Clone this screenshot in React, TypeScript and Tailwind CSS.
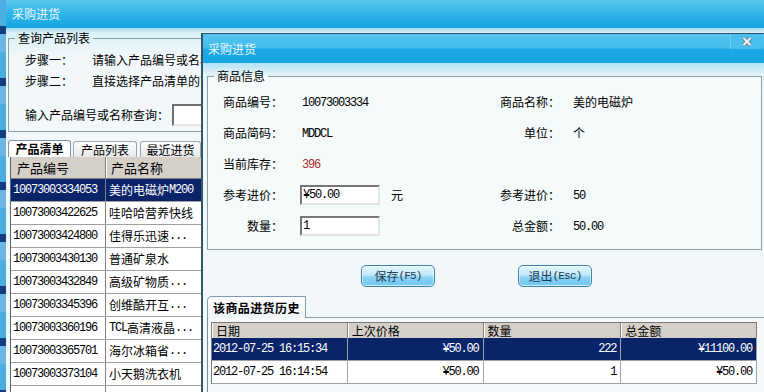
import React from 'react';

const mono = "font-['Liberation_Mono',monospace] text-[12px] tracking-[-1.2px]";

// ASCII runs get the narrow mono face, the rest stays in the CJK face
const mix = (s: string) =>
  s
    .split(/([\x20-\x7e¥]+)/)
    .filter(Boolean)
    .map((p, i) =>
      /^[\x20-\x7e¥]+$/.test(p) ? (
        <span key={i} className={mono}>
          {p}
        </span>
      ) : (
        <span key={i}>{p}</span>
      )
    );

const products = [
  ['10073003334053', '美的电磁炉M200'],
  ['10073003422625', '哇哈哈营养快线'],
  ['10073003424800', '佳得乐迅速...'],
  ['10073003430130', '普通矿泉水'],
  ['10073003432849', '高级矿物质...'],
  ['10073003345396', '创维酷开互...'],
  ['10073003360196', 'TCL高清液晶...'],
  ['10073003365701', '海尔冰箱省...'],
  ['10073003373104', '小天鹅洗衣机'],
  ['', ''],
];

const history = [
  ['2012-07-25 16:15:34', '¥50.00', '222', '¥11100.00'],
  ['2012-07-25 16:14:54', '¥50.00', '1', '¥50.00'],
];

const infoRows = [
  { l: '商品编号：', v: '10073003334', rl: '商品名称：', rv: '美的电磁炉' },
  { l: '商品简码：', v: 'MDDCL', rl: '单位：', rv: '个' },
  { l: '当前库存：', v: '396', rl: '', rv: '', red: true },
  { l: '参考进价：', v: '¥50.00', rl: '参考进价：', rv: '50', input: true, unit: '元' },
  { l: '数量：', v: '1', rl: '总金额：', rv: '50.00', input: true },
];

const inputBox =
  'flex h-[20px] w-[80px] items-center border-2 border-t-[#777] border-l-[#777] border-b-[#e4e4e4] border-r-[#e4e4e4] bg-white pl-[1px]';

function Button({ label, keyName }: { label: string; keyName: string }) {
  return (
    <div className="flex h-[22px] w-[74px] items-center justify-center rounded-[5px] border border-[#3f80b2] bg-[linear-gradient(180deg,#e4f6fd_0%,#c2e9f9_45%,#8fd3f3_55%,#70c8f1_90%,#9adaf6_100%)] text-[#1d3a58] shadow-[inset_0_0_0_1px_rgba(255,255,255,0.55)]">
      <span>{label}</span>
      <span className="font-['Liberation_Mono',monospace] text-[11px] tracking-[-0.8px]">{keyName}</span>
    </div>
  );
}

function Dialog() {
  return (
    <div className="absolute left-[201px] top-[33px] flex h-[359px] w-[563px] flex-col border-l-2 border-t border-[#34566b]">
      <div className="flex h-[29px] shrink-0 justify-between bg-[linear-gradient(180deg,#55c5ef_0%,#40bcec_48%,#1ca9e5_52%,#17a6e3_100%)]">
        <span className="self-center pl-[5px] text-[#eaf8ff]">采购进货</span>
        <div className="mr-[2px] flex h-[15px] w-[32px] items-center justify-center border-l border-[#6bcdf1] bg-[#48bfed]">
          <svg width="12" height="11" viewBox="0 0 12 11">
            <path d="M2.5 2 L9.5 9 M9.5 2 L2.5 9" stroke="#71899a" strokeWidth="4" />
            <path d="M2.5 2 L9.5 9 M9.5 2 L2.5 9" stroke="#eef3f6" strokeWidth="2" />
          </svg>
        </div>
      </div>

      <div className="flex flex-1 flex-col bg-[linear-gradient(180deg,#b2e3f5_0px,#e4f4f9_12px,#f2f8fa_40px)] pl-[4px] pt-[6px]">
        <fieldset className="w-[555px] border border-[#8c9ea9] bg-[#f5fafb]">
          <legend className="ml-[6px] px-[3px]">商品信息</legend>
          <div className="pb-[8px] pt-[3px]">
            {infoRows.map((r) => (
              <div key={r.l} className="flex h-[31px] items-center">
                <div className="w-[75px] text-right">{r.l}</div>
                <div className="w-[17px]" />
                <div className="flex w-[160px] items-center">
                  {r.input ? (
                    <>
                      <div className={inputBox}>{mix(r.v)}</div>
                      {r.unit && <span className="ml-[11px]">{r.unit}</span>}
                    </>
                  ) : (
                    <span className={`pl-[2px] ${r.red ? 'text-[#b02a2a]' : ''}`}>{mix(r.v)}</span>
                  )}
                </div>
                <div className="w-[100px] text-right">{r.rl}</div>
                <div className="pl-[13px]">{mix(r.rv)}</div>
              </div>
            ))}
          </div>
        </fieldset>

        <div className="ml-[154px] mt-[15px] flex gap-[83px]">
          <Button label="保存" keyName="(F5)" />
          <Button label="退出" keyName="(Esc)" />
        </div>

        <div className="mt-[9px] flex h-[22px] items-end">
          <div className="flex h-[22px] w-[99px] items-center rounded-tl-[5px] border-l border-r border-t border-[#7d9bb6] bg-[linear-gradient(180deg,#ffffff,#eef5f8)] pl-[5px] text-[12px] font-bold tracking-[0.4px]">
            该商品进货历史
          </div>
          <div className="flex-1 border-b border-[#8c9ea9]" />
        </div>
        <div className="flex-1 border-l border-[#7a8a96] bg-[#f4f9fb] pl-[3px] pt-[4px]">
          <div className="w-[546px] border-l border-t border-[#7b7b7b]">
            <div className="flex h-[15px] bg-[#d4d0c8] leading-[15px]">
              {['日期', '上次价格', '数量', '总金额'].map((h, i) => (
                <div
                  key={h}
                  className={`${i === 2 ? 'w-[138px]' : 'w-[136px]'} border-r border-[#808080] pl-[4px] shadow-[inset_1px_0_0_#fff]`}
                >
                  {h}
                </div>
              ))}
            </div>
            {history.map((r, i) => (
              <div
                key={i}
                className={`flex h-[23px] items-center border-b border-[#a0a0a0] ${i === 0 ? 'bg-[#0a246a] text-white' : 'bg-white'}`}
              >
                <div className="flex h-full w-[136px] items-center border-r border-[#a0a0a0] pl-[1px]">{mix(r[0])}</div>
                <div className="flex h-full w-[136px] items-center justify-end border-r border-[#a0a0a0] pr-[4px]">{mix(r[1])}</div>
                <div className="flex h-full w-[138px] items-center justify-end border-r border-[#a0a0a0] pr-[4px]">{mix(r[2])}</div>
                <div className="flex h-full w-[136px] items-center justify-end border-r border-[#a0a0a0] pr-[4px]">{mix(r[3])}</div>
              </div>
            ))}
          </div>
        </div>
      </div>
    </div>
  );
}

export default function App() {
  return (
    <div className="relative h-[392px] w-[764px] overflow-hidden bg-[#f3f9fb] font-['Noto_Sans_CJK_SC',sans-serif] text-[12px] leading-[14px] text-black">
      <div className="flex h-full">
        <div className="w-[6px] shrink-0 bg-[repeating-linear-gradient(180deg,#4aaee0_0px,#4aaee0_26px,#123f80_26px,#123f80_34px,#6cb6e4_34px,#6cb6e4_52px)]" />
        <div className="flex min-w-0 flex-1 flex-col">
          <div className="flex h-[28px] shrink-0 items-center bg-[linear-gradient(180deg,#5ac7ef,#2fb3e8_50%,#15a5e2)] pl-[6px] text-[#eef9ff]">
            采购进货
          </div>
          <div className="flex min-h-0 flex-1 flex-col bg-[linear-gradient(180deg,#a6ddf2_0px,#dcf1f8_5px,#f2f8fa_30px)] pt-[3px]">
            <fieldset className="ml-[2px] w-[700px] border border-[#8c9ea9]">
              <legend className="ml-[6px] px-[3px]">查询产品列表</legend>
              <div className="whitespace-nowrap pb-[5px] pl-[16px] pt-[4px]">
                <div className="flex h-[21px] items-center">
                  <span className="w-[67px]">步骤一：</span>
                  <span className="w-[109px] overflow-hidden">请输入产品编号或名称进行查询</span>
                </div>
                <div className="flex h-[21px] items-center">
                  <span className="w-[67px]">步骤二：</span>
                  <span className="w-[109px] overflow-hidden">直接选择产品清单的商品进行进货</span>
                </div>
                <div className="mt-[13px] flex h-[22px] items-center">
                  <span>输入产品编号或名称查询：</span>
                  <div className="ml-[3px] h-[22px] w-[160px] border-2 border-t-[#6f6f6f] border-l-[#6f6f6f] border-b-[#e4e4e4] border-r-[#e4e4e4] bg-white" />
                </div>
              </div>
            </fieldset>

            <div className="ml-[2px] mt-[8px] flex min-h-0 w-[195px] flex-1 flex-col">
              <div className="flex h-[17px] shrink-0 items-end">
                <div className="flex h-[17px] w-[63px] items-center justify-center rounded-t-[3px] border-l border-r border-t border-[#7d96ad] bg-white text-[12px] font-bold">
                  产品清单
                </div>
                <div className="ml-[2px] flex h-[16px] w-[64px] items-center justify-center rounded-t-[3px] border-l border-r border-t border-[#9aa6b0] bg-[linear-gradient(180deg,#fdfdfd,#e6e8ea)]">
                  产品列表
                </div>
                <div className="ml-[3px] flex h-[16px] w-[61px] items-center justify-center rounded-t-[3px] border-l border-r border-t border-[#9aa6b0] bg-[linear-gradient(180deg,#fdfdfd,#e6e8ea)]">
                  最近进货
                </div>
              </div>
              <div className="ml-[2px] min-h-0 flex-1 overflow-hidden border-l border-[#55687a] bg-white">
                <div className="flex h-[22px] border-b border-[#808080] bg-[#d4d0c8] text-[13px]">
                  <div className="flex w-[95px] items-center border-r border-[#808080] pl-[6px]">产品编号</div>
                  <div className="flex flex-1 items-center pl-[5px] shadow-[inset_1px_0_0_#fff]">产品名称</div>
                </div>
                {products.map((p, i) => (
                  <div
                    key={i}
                    className={`flex h-[23px] items-center border-b border-[#a0a0a0] whitespace-nowrap ${i === 0 ? 'bg-[#0a246a] text-white' : ''}`}
                  >
                    <div className="flex h-full w-[95px] items-center border-r border-[#808080] pl-[2px]">{mix(p[0])}</div>
                    <div className="flex h-full flex-1 items-center overflow-hidden pl-[3px]">{mix(p[1])}</div>
                  </div>
                ))}
              </div>
            </div>
          </div>
        </div>
      </div>
      <Dialog />
    </div>
  );
}
